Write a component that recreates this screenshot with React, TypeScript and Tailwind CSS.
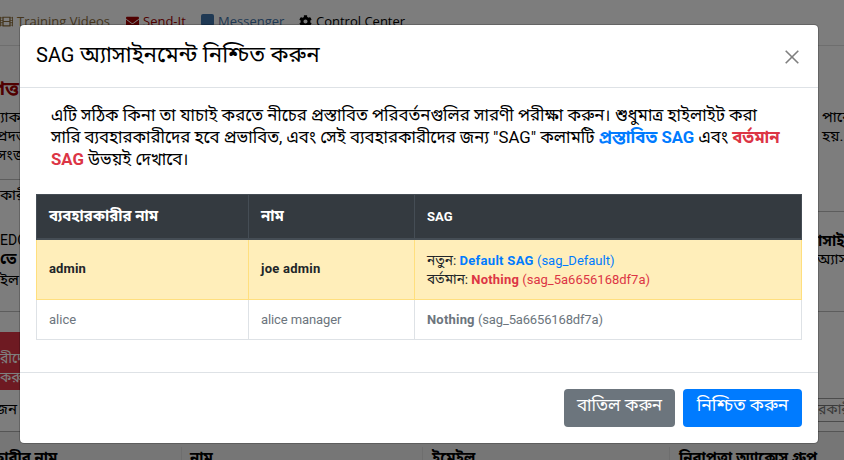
import React from 'react';
import { FaFilm, FaEnvelope, FaCog } from 'react-icons/fa';

type EdgeRowProps = { className: string; left?: React.ReactNode; right?: React.ReactNode };

function EdgeRow({ className, left, right }: EdgeRowProps) {
  return (
    <div className={'flex justify-between overflow-hidden whitespace-nowrap ' + className}>
      <div className="w-[40px] shrink-0">{left}</div>
      <div className="w-[26px] shrink-0">{right}</div>
    </div>
  );
}

function PageBehind() {
  return (
    <div className="flex h-full flex-col bg-[#fafafa] text-[15px] text-black">
      <nav className="flex h-[46px] shrink-0 border-b border-[#dddddd] pt-[11px] text-[13px] leading-[20px] whitespace-nowrap font-['Open_Sans',sans-serif]">
        <div className="flex h-[20px] w-[126px] items-center gap-[4px] text-[#8a6d3b]"><FaFilm size={13} />Training Videos</div>
        <div className="flex h-[20px] w-[74px] items-center gap-[4px] text-[#a00000]"><FaEnvelope size={13} />Send-It</div>
        <div className="flex h-[20px] w-[99px] items-center gap-[4px] pl-px text-[#3e72a8]"><span className="-mt-[2px] h-[12px] w-[13px] rounded-[2px] bg-[#3e72a8]" />Messenger</div>
        <div className="flex h-[20px] items-center gap-[4px]"><FaCog size={13} />Control Center</div>
      </nav>
      <EdgeRow className="mt-[32px] h-[23px] shrink-0 text-[19px] font-bold leading-[22px] text-[#a00000]" left={<div className="-ml-[9px]">পত্ত</div>} />
      <EdgeRow className="mt-[5px] h-[20px] shrink-0 leading-[22px]" left={<div className="-ml-[13px]">অ্যাক</div>} right={<div className="pl-[4px]">পারে</div>} />
      <EdgeRow className="h-[19px] shrink-0 leading-[20px]" left={<div className="-ml-[4px]">প্রদত্ত</div>} right={<div className="pl-[4px]">হয়.</div>} />
      <EdgeRow className="h-[34px] shrink-0 leading-[20px]" left={<div className="-ml-[3px]">সংজ্ঞ</div>} />
      <EdgeRow className="h-[32px] shrink-0 leading-[30px]" left={<div className="border-t border-[#bbbbbb]">কারী</div>} />
      <EdgeRow className="h-[39px] shrink-0 leading-[58px]" left={<div className="text-[14px]">EDC</div>} right={<div className="border-t border-[#bbbbbb] font-bold"><span className="-ml-[18px]">অ্যাসাই</span></div>} />
      <EdgeRow className="h-[20px] shrink-0 leading-[18px]" left={<b>তে</b>} right={<div className="-ml-[1px]">অ্যাস</div>} />
      <EdgeRow className="h-[41px] shrink-0 leading-[20px]" left="ইল" />
      <div className="h-[21px] shrink-0 border-t border-[#bbbbbb]" />
      <div className="h-[58px] w-[40px] shrink-0 bg-[#dc3545] pt-[17px] text-[14px] leading-[19px] whitespace-nowrap text-white">রীদে<br />করুন</div>
      <EdgeRow className="h-[41px] shrink-0 leading-[38px]" left={<div className="-ml-[5px]">জন ব</div>} right={<div className="mt-[8px] h-[24px] border-y border-[#999999] text-[14px] leading-[20px] text-[#777777]">রকারী</div>} />
      <div className="flex flex-1 border-t border-[#aaaaaa] bg-[#ececec] pt-[15px] font-bold leading-[22px] whitespace-nowrap">
        <div className="w-[182px] border-r border-[#dddddd]"><span className="-ml-[8px]">কারীর নাম</span></div>
        <div className="w-[241px] border-r border-[#dddddd] pl-[8px]">নাম</div>
        <div className="w-[247px] border-r border-[#dddddd] pl-[9px]">ইমেইল</div>
        <div className="pl-[9px]">নিরাপত্তা অ্যাক্সেস গ্রুপ</div>
      </div>
    </div>
  );
}

function AssignmentTable() {
  return (
    <table className="mt-[24px] w-full table-fixed border-collapse text-[13px] leading-[18px]">
      <colgroup><col className="w-[212px]" /><col className="w-[166px]" /><col /></colgroup>
      <thead>
        <tr className="h-[44px] bg-[#343a40] text-left text-white">
          <th className="border border-b-2 border-[#454d55] px-[12px] text-[15px]">ব্যবহারকারীর নাম</th>
          <th className="border border-b-2 border-[#454d55] px-[12px] text-[15px]">নাম</th>
          <th className="border border-b-2 border-[#454d55] px-[12px] pt-[2px]">SAG</th>
        </tr>
      </thead>
      <tbody>
        <tr className="h-[61px] bg-[#ffeeba] text-[#212529]">
          <td className="border border-[#ffdf7e] px-[12px] font-bold tracking-[0.15px]">admin</td>
          <td className="border border-[#ffdf7e] px-[12px] font-bold tracking-[0.25px]">joe admin</td>
          <td className="border border-[#ffdf7e] px-[12px] pt-[2px] whitespace-nowrap">
            <div><span className="text-[13.6px]">নতুন:</span> <span className="text-[#007bff]"><b className="tracking-[0.3px]">Default SAG</b> (sag_Default)</span></div>
            <div><span className="text-[13.6px]">বর্তমান:</span> <span className="text-[#dc3545]"><b className="tracking-[0.2px]">Nothing</b> (sag_5a6656168df7a)</span></div>
          </td>
        </tr>
        <tr className="h-[40px] text-[#6c757d]">
          <td className="border border-[#dee2e6] px-[12px]">alice</td>
          <td className="border border-[#dee2e6] px-[12px] tracking-[-0.1px]">alice manager</td>
          <td className="border border-[#dee2e6] px-[12px]"><b className="tracking-[0.2px]">Nothing</b> <span className="tracking-[-0.15px]">(sag_5a6656168df7a)</span></td>
        </tr>
      </tbody>
    </table>
  );
}

export default function App() {
  return (
    <div className="relative h-[460px] w-[844px] overflow-hidden font-['Roboto','Noto_Sans_Bengali',sans-serif]">
      <PageBehind />
      <div className="absolute inset-0 bg-black/50" />
      <section className="absolute top-[24px] left-[19px] flex h-[420px] w-[800px] flex-col rounded-[5px] border border-black/20 bg-white bg-clip-padding text-black">
        <header className="flex h-[63px] shrink-0 justify-between border-b border-[#dee2e6] px-[16px]">
          <h5 className="pt-[14px] text-[22.3px] leading-[30px]"><span className="text-[20px]">SAG</span> অ্যাসাইনমেন্ট নিশ্চিত করুন</h5>
          <svg className="mt-[25px] mr-[3px]" width="14" height="14" viewBox="0 0 14 14" stroke="#7f7f7f" strokeWidth="1.6"><path d="M.7.7l12.6 12.6M13.3.7L.7 13.3" /></svg>
        </header>
        <div className="h-[285px] shrink-0 border-b border-[#dee2e6] px-[16px] pt-[16px]">
          <div className="px-[15px] text-[16.8px] leading-[22px] whitespace-nowrap">
            <div>এটি সঠিক কিনা তা যাচাই করতে নীচের প্রস্তাবিত পরিবর্তনগুলির সারণী পরীক্ষা করুন। শুধুমাত্র হাইলাইট করা</div>
            <div>সারি ব্যবহারকারীদের হবে প্রভাবিত, এবং সেই ব্যবহারকারীদের জন্য "SAG" কলামটি <b className="text-[#007bff]">প্রস্তাবিত SAG</b> এবং <b className="text-[#dc3545]">বর্তমান</b></div>
            <div><b className="text-[#dc3545]">SAG</b> উভয়ই দেখাবে।</div>
          </div>
          <AssignmentTable />
        </div>
        <footer className="flex justify-end gap-[8px] px-[16px] pt-[16px] text-white">
          <button className="h-[38px] w-[111px] rounded-[4px] bg-[#6c757d] pb-[5px] text-[17px] leading-[33px] whitespace-nowrap">বাতিল করুন</button>
          <button className="h-[38px] w-[119px] rounded-[4px] bg-[#007bff] pb-[5px] text-[17.5px] leading-[33px] whitespace-nowrap">নিশ্চিত করুন</button>
        </footer>
      </section>
    </div>
  );
}
